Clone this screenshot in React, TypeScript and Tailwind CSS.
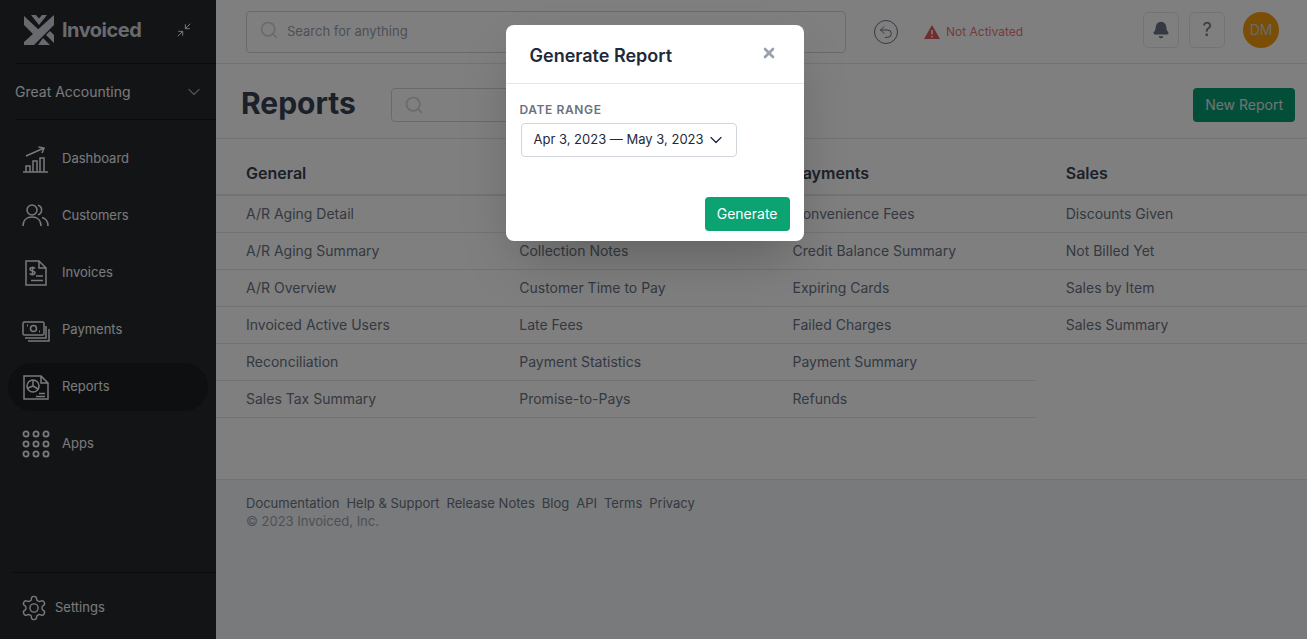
import { Bell, ChevronDown, Minimize2, Search, Undo2, X } from "lucide-react";
import type { ReactNode } from "react";

const FONT = { fontFamily: "Inter, 'Noto Sans', sans-serif" };

const iconClass = "h-7 w-7 shrink-0";

function DashboardIcon() {
  return (
    <svg className={iconClass} viewBox="0 0 28 28" fill="none" stroke="currentColor" strokeWidth="1.5">
      <path d="M1 27h25" />
      <path d="M4 27v-6h4v6M11 27V16h4v11M18 27V13h4v14" />
      <path d="M4 11 22 3M16.500 2l5.500 1-2 5" />
    </svg>
  );
}

function CustomersIcon() {
  return (
    <svg className={iconClass} viewBox="0 0 28 28" fill="none" stroke="currentColor" strokeWidth="1.500">
      <circle cx="10" cy="8" r="5" />
      <path d="M1 24c0-6 4-9 9-9s9 3 9 9" />
      <path d="M16 3.200a5 5 0 0 1 0 9.600M20 15.500c4 1 6 4 6 8.500" />
    </svg>
  );
}

function InvoicesIcon() {
  return (
    <svg className={iconClass} viewBox="0 0 28 28" fill="none" stroke="currentColor" strokeWidth="1.500">
      <path d="M4 2h13l7 7v17H4zM17 2v7h7" />
      <path d="M13 9.500c-1-1.500-5-1.500-5 .700 0 2.300 5 1.300 5 3.600 0 2.200-4 2.200-5.200.700M10.500 7.500v9" />
      <path d="M14 17h7M9 21.500h12" />
    </svg>
  );
}

function PaymentsIcon() {
  return (
    <svg className={iconClass} viewBox="0 0 28 28" fill="none" stroke="currentColor" strokeWidth="1.500">
      <rect x="1" y="6" width="21" height="13" rx="1.500" />
      <circle cx="11.500" cy="12.500" r="3" />
      <path d="M5 9.500h1M17 15.500h1" strokeWidth="2" />
      <path d="M3 22h21V10M6 25h21V13" />
    </svg>
  );
}

function ReportsIcon() {
  return (
    <svg className={iconClass} viewBox="0 0 28 28" fill="none" stroke="currentColor" strokeWidth="1.500">
      <path d="M2 3h17l7 7v16H2zM19 3v7h7" />
      <circle cx="11" cy="13" r="6" />
      <path d="M11 13V7M11 13l5 3M11 13l-5 2" />
      <path d="M17 20.500h6M14 23.500h9" />
    </svg>
  );
}

function AppsIcon() {
  const spots = [4, 14, 24];
  return (
    <svg className={iconClass} viewBox="0 0 28 28" fill="none" stroke="currentColor" strokeWidth="1.800">
      {spots.map((y) => spots.map((x) => <circle key={`${x}-${y}`} cx={x} cy={y} r="2.600" />))}
    </svg>
  );
}

function GearIcon() {
  return (
    <svg className="h-7 w-7 shrink-0" viewBox="0 0 24 24" fill="none" stroke="currentColor" strokeWidth="1.200" strokeLinejoin="round">
      <path d="M12.220 2h-.44a2 2 0 0 0-2 2v.18a2 2 0 0 1-1 1.730l-.43.25a2 2 0 0 1-2 0l-.15-.08a2 2 0 0 0-2.730.73l-.22.38a2 2 0 0 0 .73 2.730l.15.1a2 2 0 0 1 1 1.720v.51a2 2 0 0 1-1 1.740l-.15.09a2 2 0 0 0-.73 2.730l.22.38a2 2 0 0 0 2.730.73l.15-.08a2 2 0 0 1 2 0l.43.25a2 2 0 0 1 1 1.730V20a2 2 0 0 0 2 2h.44a2 2 0 0 0 2-2v-.18a2 2 0 0 1 1-1.730l.43-.25a2 2 0 0 1 2 0l.15.08a2 2 0 0 0 2.730-.73l.22-.39a2 2 0 0 0-.73-2.730l-.15-.08a2 2 0 0 1-1-1.740v-.5a2 2 0 0 1 1-1.740l.15-.09a2 2 0 0 0 .73-2.730l-.22-.38a2 2 0 0 0-2.730-.73l-.15.08a2 2 0 0 1-2 0l-.43-.25a2 2 0 0 1-1-1.730V4a2 2 0 0 0-2-2z" />
      <circle cx="12" cy="12" r="3.500" />
    </svg>
  );
}

function Logo() {
  return (
    <svg className="h-7.5 w-7.5 text-gray-300" viewBox="0 0 30 30" fill="currentColor">
      <path d="M7 0h5l3 3.500L18 0h5l-8 10z" />
      <path d="M0 1v9l10 10 5-5z" />
      <path d="M30 0v10L10 30H0v-3z" />
      <path d="M22 20l4-4 4 4v8z" />
      <path d="M19 23l7 7H14z" />
    </svg>
  );
}

function WarningIcon() {
  return (
    <svg className="ml-6.5 h-4 w-4" viewBox="0 0 16 16">
      <path d="M8 1 16 15H0z" fill="#e05a5a" />
      <path d="M8 6v4.500M8 12v1.500" stroke="#fff" strokeWidth="1.500" />
    </svg>
  );
}

const NAV: { label: string; icon: ReactNode; active?: boolean }[] = [
  { label: "Dashboard", icon: <DashboardIcon /> },
  { label: "Customers", icon: <CustomersIcon /> },
  { label: "Invoices", icon: <InvoicesIcon /> },
  { label: "Payments", icon: <PaymentsIcon /> },
  { label: "Reports", icon: <ReportsIcon />, active: true },
  { label: "Apps", icon: <AppsIcon /> },
];

const COLUMNS = [
  {
    title: "General",
    items: ["A/R Aging Detail", "A/R Aging Summary", "A/R Overview", "Invoiced Active Users", "Reconciliation", "Sales Tax Summary"],
  },
  {
    title: "Collections",
    items: ["Bad Debt", "Collection Notes", "Customer Time to Pay", "Late Fees", "Payment Statistics", "Promise-to-Pays"],
  },
  {
    title: "Payments",
    items: ["Convenience Fees", "Credit Balance Summary", "Expiring Cards", "Failed Charges", "Payment Summary", "Refunds"],
  },
  {
    title: "Sales",
    items: ["Discounts Given", "Not Billed Yet", "Sales by Item", "Sales Summary"],
  },
];

const FOOTER_LINKS = ["Documentation", "Help & Support", "Release Notes", "Blog", "API", "Terms", "Privacy"];

function Sidebar() {
  return (
    <aside className="flex h-full w-[216px] shrink-0 flex-col bg-[#24292c] text-gray-100">
      <div className="ml-4 flex h-16 items-center justify-between border-b border-black/40 pr-6 pb-1 pl-2">
        <div className="flex items-center gap-2">
          <Logo />
          <span className="text-xl font-bold tracking-tight text-gray-300">Invoiced</span>
        </div>
        <Minimize2 className="h-4 w-4" strokeWidth={1.5} />
      </div>
      <div className="ml-4 flex h-14 items-center justify-between border-b border-black/40 pr-3 text-sm">
        <span className="-ml-px">Great Accounting</span>
        <ChevronDown className="h-5 w-5 text-gray-400" strokeWidth={1.5} />
      </div>
      <nav className="flex flex-1 flex-col gap-2.25 px-2 pt-3.75">
        {NAV.map((item) => (
          <a
            key={item.label}
            className={`flex h-12 items-center gap-3 rounded-full px-3.5 text-[13px] ${item.active ? "bg-[#1a1e21]" : ""}`}
          >
            {item.icon}
            <span>{item.label}</span>
          </a>
        ))}
      </nav>
      <div className="ml-3 flex h-[67px] items-center gap-1.75 border-t border-black/40 pt-1 pl-2 text-[13px]">
        <GearIcon />
        <span>Settings</span>
      </div>
    </aside>
  );
}

function TopBar() {
  return (
    <header className="flex h-16 shrink-0 items-center border-b border-gray-200 pr-7 pl-7.5">
      <div className="flex h-10.5 w-[600px] items-center gap-2 rounded border border-gray-300 px-3 text-[13px] text-gray-400">
        <Search className="h-5 w-5 -translate-y-0.5 text-gray-300" strokeWidth={2} />
        <span>Search for anything</span>
      </div>
      <div className="ml-7 flex h-6 w-6 items-center justify-center rounded-full border border-gray-500 text-gray-500">
        <Undo2 className="h-4 w-4" strokeWidth={1.5} />
      </div>
      <WarningIcon />
      <span className="ml-1.5 text-xs text-[#e87878]">Not Activated</span>
      <div className="mb-1 ml-auto flex items-center gap-2.5">
        <div className="flex h-9 w-9 items-center justify-center rounded-md border border-gray-200 text-gray-500">
          <Bell className="h-4.5 w-4.5 fill-current" />
        </div>
        <div className="flex h-9 w-9 items-center justify-center rounded-md border border-gray-200 text-lg text-gray-500">?</div>
        <div className="ml-2 flex h-9 w-9 items-center justify-center rounded-full bg-[#f59e0b] text-sm text-gray-300">DM</div>
      </div>
    </header>
  );
}

function ReportTable() {
  return (
    <div className="grid h-[340px] w-[1093px] shrink-0 grid-cols-4 content-start">
      {COLUMNS.map((col) => (
        <div key={col.title}>
          <div className="flex h-[57px] items-end border-b-2 border-gray-200 pb-2.25 pl-7.5 text-base font-semibold text-gray-700">
            {col.title}
          </div>
          {col.items.map((label) => (
            <div key={label} className="flex h-[37px] items-center border-b border-gray-200 pl-7.5 text-sm text-gray-500">
              {label}
            </div>
          ))}
        </div>
      ))}
    </div>
  );
}

function Footer() {
  return (
    <footer className="flex-1 border-t border-gray-200 bg-gray-100 px-7.5 pt-3.5 text-[13px] leading-[18px]">
      <div className="flex gap-1.75 text-gray-500">
        {FOOTER_LINKS.map((label) => (
          <a key={label}>{label}</a>
        ))}
      </div>
      <div className="text-gray-400">© 2023 Invoiced, Inc.</div>
    </footer>
  );
}

function Modal() {
  return (
    <div className="w-[298px] rounded-lg bg-white shadow-2xl">
      <div className="flex h-[59px] items-center justify-between border-b border-gray-200 pt-1 pr-6.75 pl-6">
        <h3 className="text-lg font-semibold text-gray-800">Generate Report</h3>
        <X className="mb-1.5 h-4 w-4 text-gray-400" strokeWidth={4} />
      </div>
      <div className="pt-4.5 pr-3.5 pb-2.5 pl-3.75">
        <div className="mb-1.25 -ml-px text-xs font-semibold tracking-wider text-gray-500">DATE RANGE</div>
        <div className="flex h-[34px] w-[216px] items-center justify-between rounded border border-gray-300 pr-2.5 pl-3 text-[13px] whitespace-nowrap text-gray-800">
          <span>Apr 3, 2023 — May 3, 2023</span>
          <ChevronDown className="h-5 w-5" strokeWidth={1.5} />
        </div>
        <div className="mt-10 flex justify-end">
          <button className="h-[34px] rounded bg-[#0ba371] px-3 text-sm text-white">Generate</button>
        </div>
      </div>
    </div>
  );
}

export default function App() {
  return (
    <div className="relative flex h-screen w-full overflow-hidden bg-white" style={FONT}>
      <Sidebar />
      <main className="flex min-w-0 flex-1 flex-col">
        <TopBar />
        <div className="flex h-[75px] shrink-0 items-center border-b border-gray-200 pt-2 pr-3 pl-6.25">
          <h1 className="mb-1 text-3xl font-bold text-gray-700">Reports</h1>
          <div className="ml-8.75 flex h-[34px] w-64 items-center rounded border border-gray-300 px-3 text-gray-300">
            <Search className="h-5 w-5" strokeWidth={2} />
          </div>
          <button className="ml-auto h-[34px] rounded bg-[#059c70] px-3 text-sm text-gray-200">New Report</button>
        </div>
        <ReportTable />
        <Footer />
      </main>
      <div className="absolute inset-0 flex items-start justify-center bg-black/50 pt-6.25 pl-0.5">
        <Modal />
      </div>
    </div>
  );
}
